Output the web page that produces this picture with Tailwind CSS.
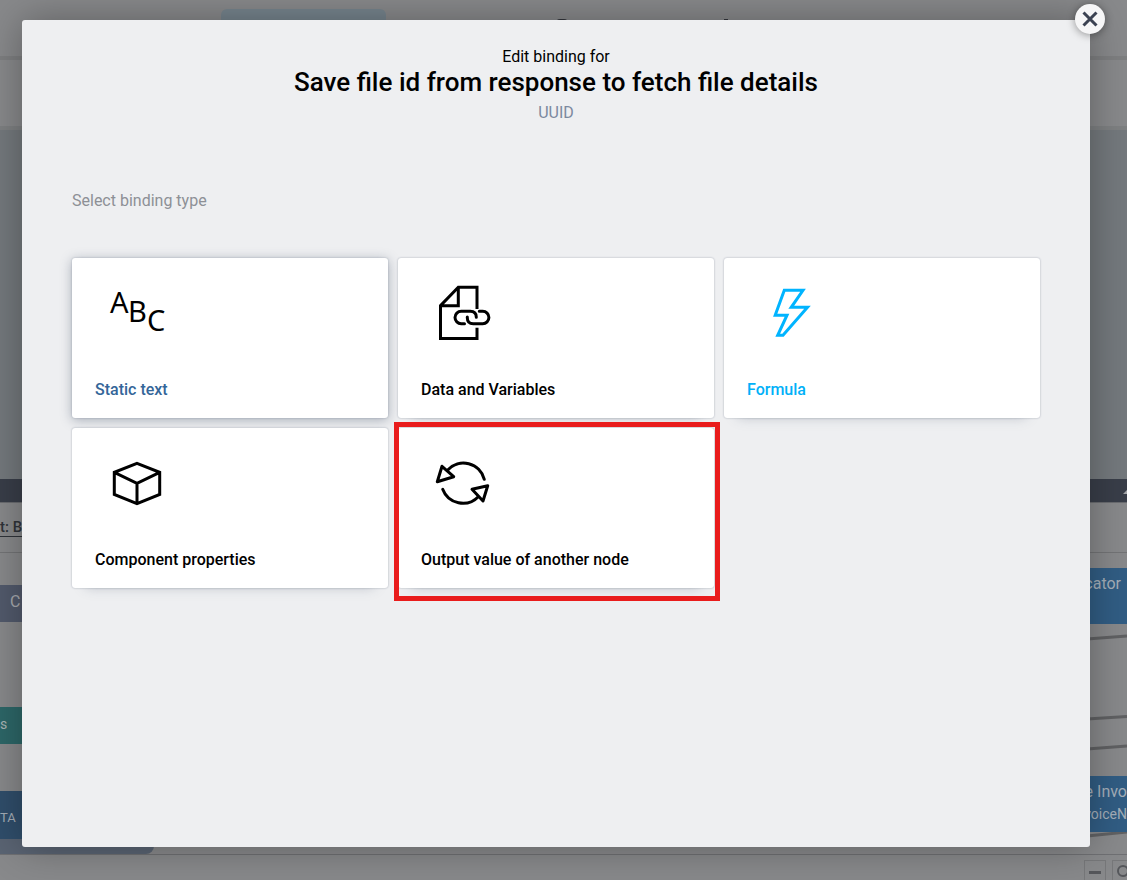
<!DOCTYPE html>
<html lang="en">
<head>
<meta charset="utf-8">
<meta name="viewport" content="width=device-width, initial-scale=1">
<title>Edit binding</title>
<script src="https://cdn.jsdelivr.net/npm/@tailwindcss/browser@4"></script>
</head>
<body class="relative h-screen overflow-hidden bg-[#88898b] font-['Roboto','Noto_Sans',sans-serif] text-black">

<!-- Dimmed editor page -->
<div class="flex h-full flex-col" aria-hidden="true">
  <header class="relative h-[60px] shrink-0 border-b-4 border-[#7e7f81]">
    <div class="ml-[221px] mt-[9px] h-8 w-[165px] rounded-md bg-[#76848d]"></div>
    <span class="absolute left-[556px] top-[19px] h-2 w-3 rounded-full bg-[#33363c]"></span>
    <span class="absolute left-[724px] top-[19px] h-2 w-1 bg-[#33363c]"></span>
  </header>
  <div class="h-[70px] shrink-0 border-b-4 border-[#7e8082]"></div>
  <div class="flex-1 bg-[#74797d]"></div>
  <div class="flex h-6 shrink-0 items-center justify-end border-b border-[#6a6c70] bg-[#393e49]">
    <svg class="h-3 w-1" viewBox="0 0 4 12"><path d="M0 9 4 5V9Z" fill="#a4a6a9"/></svg>
  </div>
  <div class="flex h-[50px] shrink-0 items-center border-b border-[#737476]">
    <span class="whitespace-nowrap text-[15px] font-medium text-[#2f3339] underline underline-offset-4">t: B</span>
  </div>
  <div class="relative h-[302px] shrink-0 overflow-hidden border-b border-[#6f7073]">
    <div class="absolute left-0 top-8 h-[37px] w-24 bg-[#525a6c] pl-[10px] text-base leading-[34px] text-[#a9abb0]">C</div>
    <div class="absolute left-0 top-[154px] h-[37px] w-24 bg-[#2d6768] text-sm leading-[34px] text-[#a9b5b5]">s</div>
    <div class="absolute left-0 top-[238px] h-12 w-24 bg-[#304e6b] text-[13px] leading-[54px] text-[#a4adb6]">TA</div>
    <div class="absolute left-0 top-[286px] h-[15px] w-[154px] rounded-br-lg bg-[#5a6473]"></div>
    <svg class="absolute right-0 top-0 h-[300px] w-10" viewBox="0 0 40 300" fill="none" stroke="#606163" stroke-width="3"><path d="M0 86 40 83M0 166 40 163.500M0 196 40 193M0 283 40 279"/></svg>
    <div class="absolute right-0 top-[15px] flex h-14 w-20 justify-end bg-[#315d84] pr-[6px] text-base leading-8 text-[#a5afb9]">cator</div>
    <div class="absolute right-0 top-[223px] flex h-14 w-20 flex-col items-end whitespace-nowrap bg-[#315d84] text-[#a5afb9]">
      <span class="text-base leading-8">e Invo</span>
      <span class="text-sm leading-3">voiceN</span>
    </div>
  </div>
  <footer class="flex h-[25px] shrink-0 justify-end gap-1.5 overflow-hidden pt-[5px]">
    <div class="flex h-6 w-[22px] items-center justify-center border border-[#77787a]"><span class="h-[3px] w-3 bg-[#55575b]"></span></div>
    <div class="h-6 w-[15px] border border-r-0 border-[#77787a] pl-1 pt-1">
      <svg class="h-4 w-[10px]" viewBox="0 0 10 16" fill="none" stroke="#55575b" stroke-width="2"><circle cx="6" cy="6" r="5"/></svg>
    </div>
  </footer>
</div>

<!-- Binding dialog -->
<main role="dialog" aria-labelledby="dialog-title" class="absolute bottom-[33px] left-[22px] right-[37px] top-5 rounded-[3px] bg-[#eeeff1] px-[50px] pt-[27px] shadow-[0_0_40px_rgba(0,0,0,0.32)]">
  <button type="button" aria-label="Close" class="absolute -right-[15px] -top-4 flex size-[30px] items-center justify-center rounded-full bg-[#f6f6f7] shadow-[0_1px_8px_rgba(0,0,0,0.4)]">
    <svg class="size-4" viewBox="0 0 16 16" fill="none" stroke="#3b4252" stroke-width="3"><path d="M1.500 1.500 14.500 14.500M14.500 1.500 1.500 14.500"/></svg>
  </button>
  <div class="text-center">
    <p class="text-base leading-5">Edit binding for</p>
    <h1 id="dialog-title" class="text-[26px] font-medium leading-[30px]">Save file id from response to fetch file details</h1>
    <p class="text-base leading-8 text-[#7c899f]">UUID</p>
  </div>
  <h2 class="mt-[60px] text-base leading-6 text-[#8d9096]">Select binding type</h2>

  <div class="mt-[45px] grid grid-cols-3 gap-[10px] text-base font-medium leading-6">
    <button type="button" class="flex h-40 flex-col justify-between rounded-[3px] bg-white px-[23px] pb-4 pt-[25px] text-left text-[#346699] shadow-[0_0_2px_rgba(60,75,100,0.35),0_2px_12px_rgba(60,75,100,0.4)]">
      <svg class="ml-3 size-[60px] font-['Noto_Sans',sans-serif] font-normal" viewBox="0 0 60 60" fill="#000" font-size="29"><text x="3" y="30">A</text><text x="21" y="39">B</text><text x="40" y="48">C</text></svg>
      <span>Static text</span>
    </button>
    <button type="button" class="flex h-40 flex-col justify-between rounded-[3px] bg-white px-[23px] pb-4 pt-[25px] text-left shadow-[0_0_2px_rgba(60,75,100,0.45),0_12px_12px_-14px_rgba(60,75,100,0.35)]">
      <svg class="ml-3 size-[60px]" viewBox="0 0 60 60" fill="none" stroke="#000" stroke-width="3"><path d="M44 26V4.300H25.300L7.500 22.700V55.500H44V44.700M25.300 4.300V22.700H7.500"/><path stroke-linecap="round" d="M31.500 40.700H28.200A6.200 6.200 0 0 1 28.200 28.300H37.300Q43.300 28.300 43.300 34.300M34.300 34V34.700Q34.300 40.700 40.300 40.700H49.700A6.200 6.200 0 0 0 49.700 28.300H46.300"/></svg>
      <span>Data and Variables</span>
    </button>
    <button type="button" class="flex h-40 flex-col justify-between rounded-[3px] bg-white px-[23px] pb-4 pt-[25px] text-left text-[#00b0f8] shadow-[0_0_2px_rgba(60,75,100,0.45),0_12px_12px_-14px_rgba(60,75,100,0.35)]">
      <svg class="ml-3 size-[60px]" viewBox="0 0 60 60" fill="none" stroke="#00b4ff" stroke-width="3"><path d="M25.300 7.300H44L32.200 24.300H48.500L24 52.300H18.700L28 32.200H16.200Z"/></svg>
      <span>Formula</span>
    </button>
    <button type="button" class="flex h-40 flex-col justify-between rounded-[3px] bg-white px-[23px] pb-4 pt-[25px] text-left shadow-[0_0_2px_rgba(60,75,100,0.45),0_12px_12px_-14px_rgba(60,75,100,0.35)]">
      <svg class="ml-3 size-[60px]" viewBox="0 0 60 60" fill="none" stroke="#000" stroke-width="3"><path d="M30 10.300 52.700 19.300V41.500L30 50.700 7.300 41.500V19.300ZM7.300 19.300 30 30.300 52.700 19.300M30 30.300V50.700"/></svg>
      <span>Component properties</span>
    </button>
    <button type="button" class="relative flex h-40 flex-col justify-between rounded-[3px] bg-white px-[23px] pb-4 pt-[25px] text-left shadow-[0_0_2px_rgba(60,75,100,0.45),0_12px_12px_-14px_rgba(60,75,100,0.35)]">
      <span class="absolute -bottom-[13px] -left-1 -right-[6px] -top-[6px] border-[5px] border-[#e91c1c]"></span>
      <svg class="ml-3 size-[60px]" viewBox="0 0 60 60" fill="none" stroke="#000" stroke-width="3" stroke-linecap="round" stroke-linejoin="round"><path d="M14.700 17A21.500 21.500 0 0 1 51.300 26.300M9.700 36.300A21.500 21.500 0 0 0 45.300 43.700M9 13.300 20.700 23.700 4.300 28.700ZM54.700 32.700 50 48 39 36.300Z"/></svg>
      <span>Output value of another node</span>
    </button>
  </div>
</main>
</body>
</html>
